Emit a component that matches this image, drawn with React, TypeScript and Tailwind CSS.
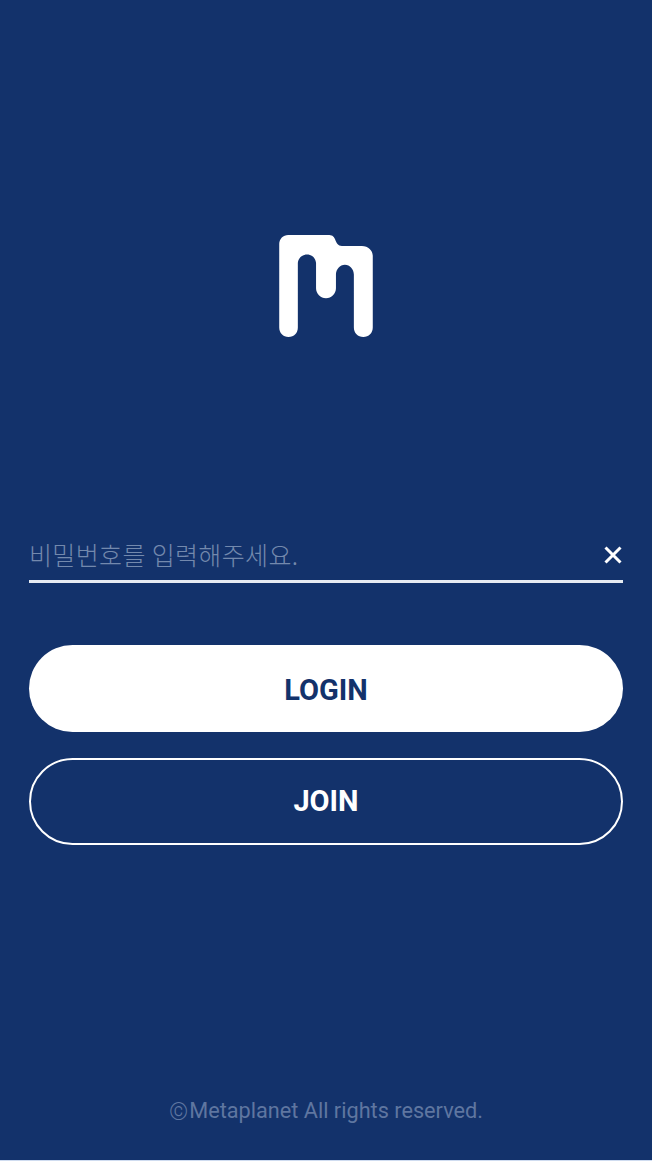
export default function App() {
  return (
    <div className="flex h-[1161px] w-[652px] flex-col overflow-hidden bg-[#13326b] font-['Roboto',sans-serif]">
      <div className="flex justify-center pt-[235px]">
        <svg width="94" height="102" viewBox="0 0 94 102.5">
          <path
            fill="#ffffff"
            d="M9 0H49C53 0 54.500 1 56 4C57.500 8 59 11 63 11H83C89.500 11 94 15.500 94 21V93C94 98.500 90 102.500 84.500 102.500C79 102.500 75 98.500 75 93V40C75 34.500 71 30 66 30C61 30 57 34.500 57 40V53.500C57 59 52.500 63.500 47 63.500C41.500 63.500 37 59 37 53.500V28.500C37 23.500 33 19.500 28 19.500C23 19.500 18.700 23.500 18.700 28.500V93C18.700 98.500 15 102.500 9.300 102.500C4 102.500 0 98.500 0 93V9C0 4 4 0 9 0Z"
          />
        </svg>
      </div>

      <div className="mx-[29px] mt-[193px] flex h-[53px] items-center justify-between border-b-[3px] border-[#e6ebf2]">
        <span className="font-['Noto_Sans_CJK_KR',sans-serif] text-[25px] font-light tracking-[0.35px] text-[#7389ad]">
          비밀번호를 입력해주세요.
        </span>
        <svg width="18" height="18" viewBox="0 0 18 18" className="mr-[1px]">
          <path d="M1.500 1.500L16.500 16.500M16.500 1.500L1.500 16.500" stroke="#ffffff" strokeWidth="3" fill="none" />
        </svg>
      </div>

      <button className="mx-[29px] mt-[62px] flex h-[87px] items-center justify-center rounded-full bg-white pt-[5px] text-[29px] font-bold text-[#13326b]">
        LOGIN
      </button>
      <button className="mx-[29px] mt-[26px] flex h-[87px] items-center justify-center rounded-full border-[2.5px] border-white text-[29px] font-bold text-white">
        JOIN
      </button>

      <p className="mt-[250px] flex h-[33px] items-center justify-center text-[21.7px] text-[#5f76a0]">
        <span className="mr-[1px] text-[24px] font-light">©</span>Metaplanet All rights reserved.
      </p>
      <div className="mt-auto h-[1.5px] bg-[#cfdcf0]" />
    </div>
  )
}
